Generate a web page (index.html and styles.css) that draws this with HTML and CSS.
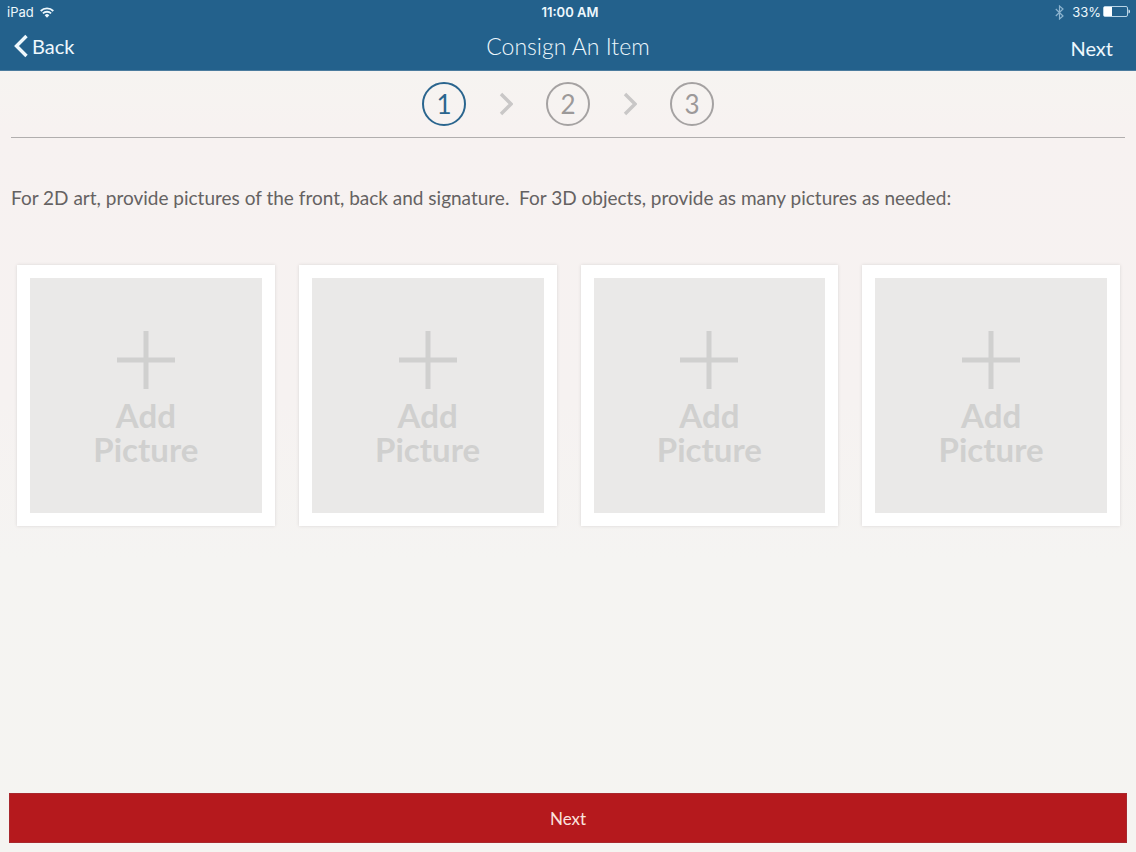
FILE: index.html
```html
<!DOCTYPE html>
<html lang="en">
<head>
<meta charset="utf-8">
<meta name="viewport" content="width=device-width, initial-scale=1">
<title>Consign An Item</title>
<link rel="stylesheet" href="styles.css">
</head>
<body>
<header class="header">
  <div class="status">
    <div class="status-side">
      <span>iPad</span>
      <svg class="wifi" viewBox="0 0 14 11" width="14" height="11" fill="none" stroke="currentColor" stroke-width="1.8" aria-hidden="true"><path d="M.7 4a9 9 0 0 1 12.600 0M2.900 6.400a5.900 5.900 0 0 1 8.200 0"/><path d="M4.700 8.200a3.300 3.300 0 0 1 4.600 0L7 10.700z" fill="currentColor" stroke="none"/></svg>
    </div>
    <span class="clock">11:00 AM</span>
    <div class="status-side status-right">
      <svg class="bluetooth" viewBox="0 0 9 15" width="9" height="15" fill="none" stroke="currentColor" stroke-width="1.200" aria-hidden="true"><path d="M.8 4l7.200 7L4.500 14V1L8 4 .8 11"/></svg>
      <span class="percent">33%</span>
      <svg viewBox="0 0 27 12" width="27" height="12" aria-hidden="true"><rect x=".5" y=".5" width="24" height="10" rx="1.500" fill="none" stroke="#b9d4e6"/><path d="M1 1h8v9H1z" fill="#fff"/><path d="M25.500 3.500c2 .5 2 3.500 0 4z" fill="#d5e6f0"/></svg>
    </div>
  </div>
  <nav class="nav">
    <button class="nav-button back" type="button"><svg viewBox="0 0 14 24" width="14" height="24" fill="none" stroke="currentColor" stroke-width="3.400" aria-hidden="true"><path d="M12.500 2L2.500 12l10 10"/></svg>Back</button>
    <h1 class="title">Consign An Item</h1>
    <button class="nav-button forward" type="button">Next</button>
  </nav>
</header>
<main class="main">
  <ol class="steps">
    <li class="step current" aria-current="step">1</li>
    <li class="arrow" aria-hidden="true"><svg viewBox="0 0 14 24" width="14" height="24" fill="none" stroke="currentColor" stroke-width="3.400"><path d="M2 2l10 10L2 22"/></svg></li>
    <li class="step">2</li>
    <li class="arrow" aria-hidden="true"><svg viewBox="0 0 14 24" width="14" height="24" fill="none" stroke="currentColor" stroke-width="3.400"><path d="M2 2l10 10L2 22"/></svg></li>
    <li class="step">3</li>
  </ol>
  <p class="hint">For 2D art, provide pictures of the front, back and signature.  For 3D objects, provide as many pictures as needed:</p>
  <div class="pictures">
    <button class="picture" type="button"><svg viewBox="0 0 60 60" width="60" height="60" stroke="currentColor" stroke-width="5" aria-hidden="true"><path d="M30 1v58M1 30h58"/></svg><span>Add<br>Picture</span></button>
    <button class="picture" type="button"><svg viewBox="0 0 60 60" width="60" height="60" stroke="currentColor" stroke-width="5" aria-hidden="true"><path d="M30 1v58M1 30h58"/></svg><span>Add<br>Picture</span></button>
    <button class="picture" type="button"><svg viewBox="0 0 60 60" width="60" height="60" stroke="currentColor" stroke-width="5" aria-hidden="true"><path d="M30 1v58M1 30h58"/></svg><span>Add<br>Picture</span></button>
    <button class="picture" type="button"><svg viewBox="0 0 60 60" width="60" height="60" stroke="currentColor" stroke-width="5" aria-hidden="true"><path d="M30 1v58M1 30h58"/></svg><span>Add<br>Picture</span></button>
  </div>
</main>
<footer class="footer">
  <button class="submit" type="button">Next</button>
</footer>
</body>
</html>
```
FILE: styles.css
```css
* { box-sizing: border-box; }
body {
  margin: 0;
  min-height: 100vh;
  display: flex;
  flex-direction: column;
  font-family: Lato, "Liberation Sans", sans-serif;
  color: #656262;
  background: linear-gradient(#f6f4f1 70px, #f7f2f1 130px, #f6f2f1 400px, #f5f4f2 560px, #f5f4f1);
}
button { font: inherit; cursor: pointer; }
.header {
  color: #eef8fd;
  background: #23618c;
  border-bottom: 1px solid #4b7c9e;
}
.status {
  display: grid;
  grid-template-columns: 1fr auto 1fr;
  align-items: center;
  height: 24px;
  padding: 0 6px 0 7px;
  font-family: Inter, "Liberation Sans", sans-serif;
  font-size: 13px;
}
.status-side { display: flex; align-items: center; gap: 6px; }
.status-right { justify-content: flex-end; gap: 2px; }
.clock { padding-left: 3px; font-weight: 600; }
.bluetooth { margin-right: 6px; color: #8db4cf; }
.nav {
  display: grid;
  grid-template-columns: 1fr auto 1fr;
  height: 46px;
  padding: 0 14px;
}
.nav-button {
  display: flex;
  align-items: center;
  gap: 4px;
  height: 44px;
  padding: 0;
  border: 0;
  color: inherit;
  background: none;
  font-size: 20px;
}
.forward { justify-self: end; height: 48px; margin-right: 9px; }
.back { justify-self: start; }
.title { margin: 0; font-size: 23px; font-weight: 300; line-height: 44px; }
.main { flex: 1; padding: 0 11px; }
.steps {
  display: flex;
  justify-content: center;
  align-items: center;
  gap: 33px;
  height: 67px;
  margin: 0;
  padding: 0;
  list-style: none;
  border-bottom: 1px solid #b1aeae;
}
.step {
  display: grid;
  place-items: center;
  width: 44px;
  height: 44px;
  border: 2px solid #a5a2a2;
  border-radius: 50%;
  color: #9c9999;
  font-size: 26px;
  line-height: 40px;
}
.current { color: #2a658e; border-color: #2a658e; }
.arrow { display: flex; color: #c9c7c7; }
.hint {
  margin: 47px 0 54px;
  font-size: 19px;
  line-height: 26px;
  white-space: pre-wrap;
}
.pictures {
  display: grid;
  grid-template-columns: repeat(4, 1fr);
  gap: 24px;
  padding: 0 5px 0 6px;
}
.picture {
  display: flex;
  flex-direction: column;
  align-items: center;
  height: 261px;
  padding: 52px 0 0;
  border: 13px solid #fff;
  color: #d0d0cf;
  background: #eae9e8;
  box-shadow: 0 0 3px #d8d5d4;
  font-size: 33px;
  font-weight: 700;
  line-height: 34px;
}
.picture span { margin-top: 8px; }
.footer { padding: 0 9px 9px; }
.submit {
  display: block;
  width: 100%;
  height: 50px;
  border: 1px solid #a8282e;
  color: #fbe3df;
  background: #b5191d;
  font-size: 17px;
}
```
